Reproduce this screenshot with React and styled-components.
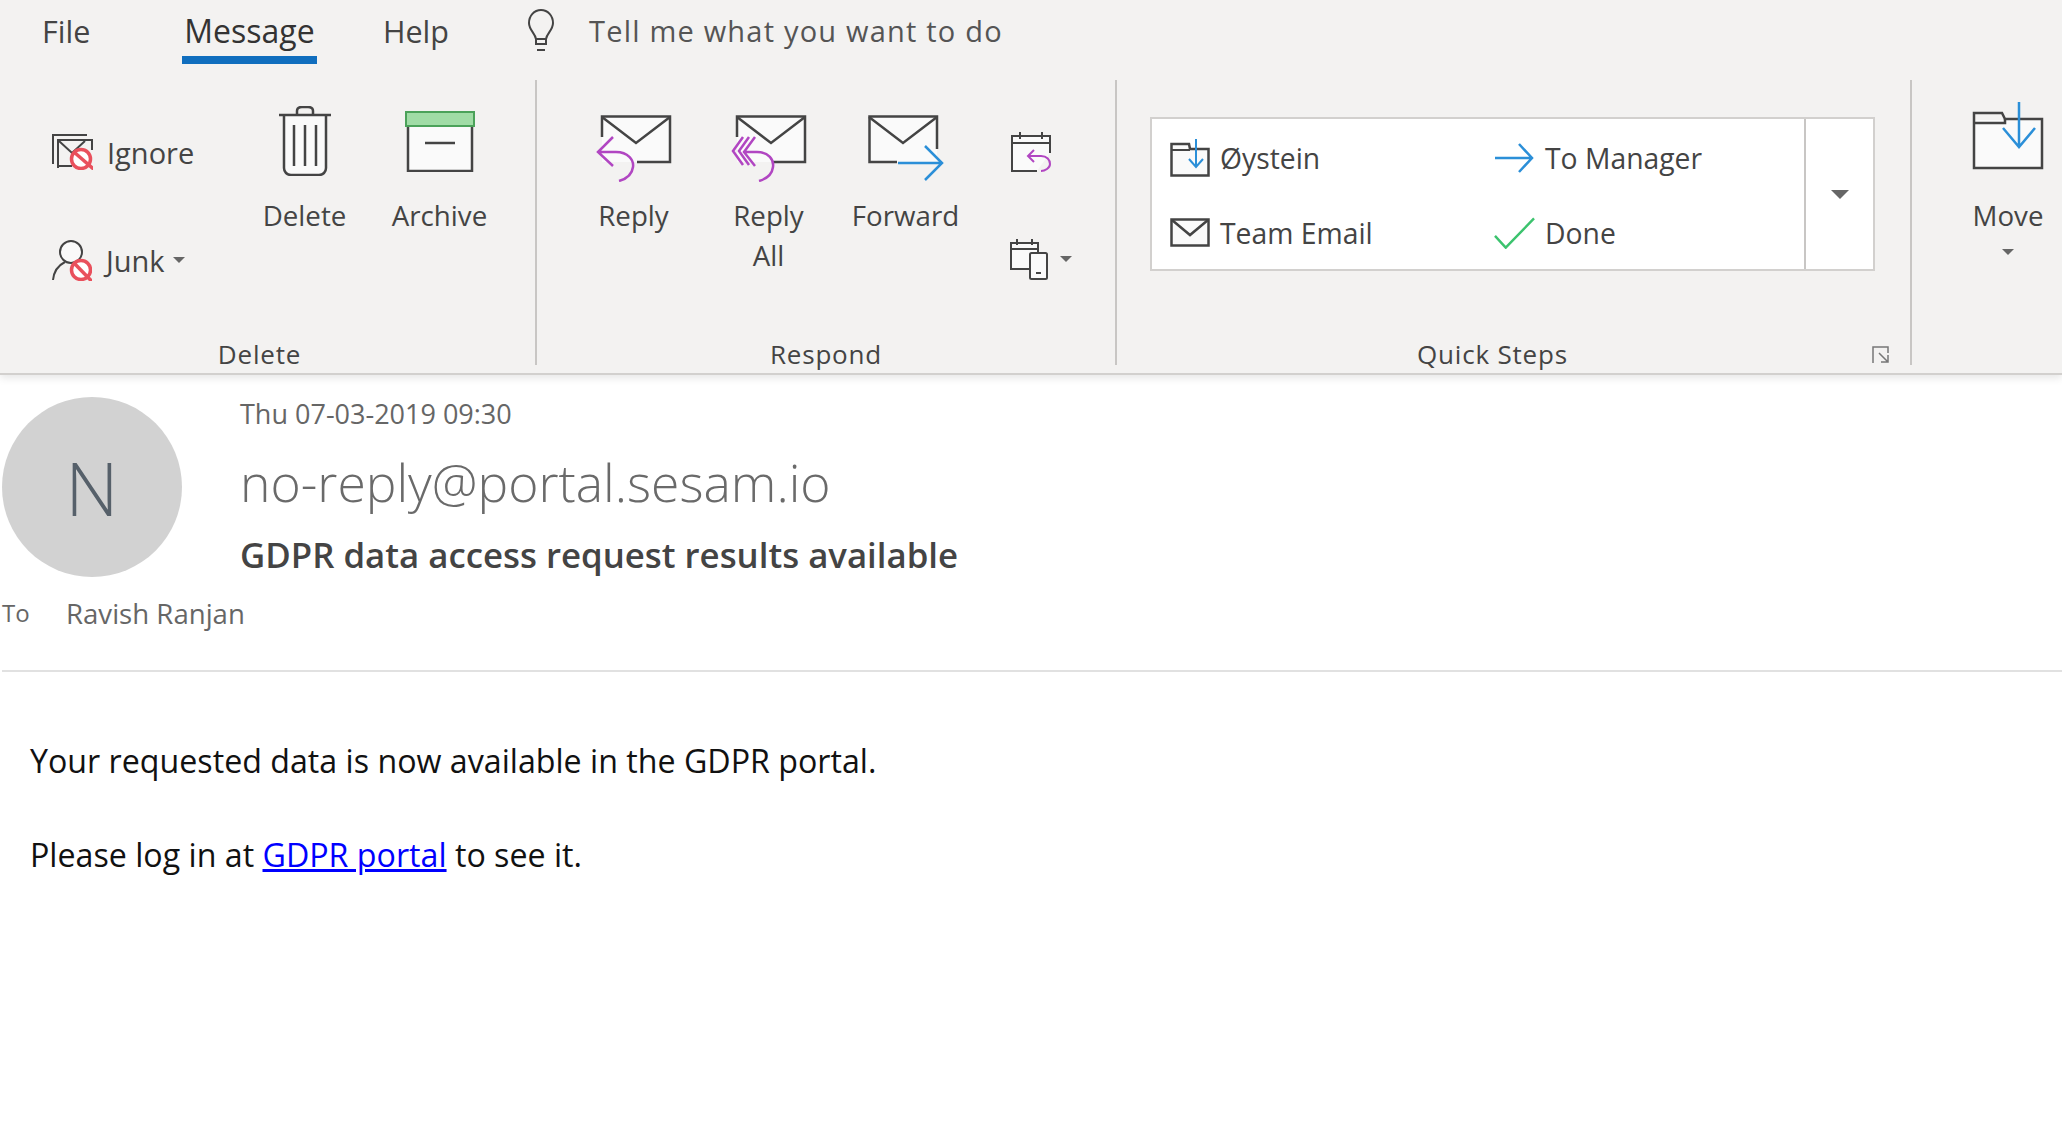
import styled, { createGlobalStyle } from "styled-components";

const GlobalStyle = createGlobalStyle`
  html, body {
    margin: 0;
    padding: 0;
    background: #fff;
    overflow: hidden;
  }
  body {
    font-family: "Open Sans", "Noto Sans", sans-serif;
  }
`;

const INK = "#444";
const PURPLE = "#b146c2";
const BLUE = "#2b8fd8";

const NoSign = ({ cx, cy }) => (
  <g fill="#fff" stroke="#e9505c" strokeWidth="3.5">
    <circle cx={cx} cy={cy} r="9.5" />
    <path d={`M${cx - 6.5} ${cy - 6.5} L${cx + 6.5} ${cy + 6.5}`} />
  </g>
);

const IgnoreIcon = () => (
  <svg width="41" height="36" viewBox="0 0 41 36" fill="none" stroke={INK} strokeWidth="2">
    <path d="M1 30V1H35" />
    <path d="M6 34V6H40V16" />
    <path d="M7 7L20 19L33 7" />
    <path d="M6 32H20" />
    <NoSign cx="29" cy="25" />
  </svg>
);

const JunkIcon = () => (
  <svg width="40" height="41" viewBox="0 0 40 41" fill="none" stroke={INK} strokeWidth="2">
    <circle cx="19" cy="12" r="11" fill="#fafafa" />
    <path d="M1 40C2 30 7 25 13 22" />
    <NoSign cx="29" cy="30" />
  </svg>
);

const TrashIcon = () => (
  <svg width="52" height="70" viewBox="0 0 52 70" fill="#fafafa" stroke={INK} strokeWidth="2.5">
    <path d="M18 8V5C18 2 20 1 23 1H29C32 1 34 2 34 5V8" fill="none" />
    <path d="M5 9V62C5 66 8 69 12 69H40C44 69 47 66 47 62V9" />
    <path d="M0 9H52" />
    <path d="M15 19V60M26 19V60M37 19V60" />
  </svg>
);

const ArchiveIcon = () => (
  <svg width="70" height="61" viewBox="0 0 70 61">
    <rect x="3" y="14" width="64" height="46" fill="#fafafa" stroke={INK} strokeWidth="2.5" />
    <rect x="1" y="1" width="68" height="14" fill="#a0dca6" stroke="#4ba25a" strokeWidth="2" />
    <path d="M20 32H50" stroke={INK} strokeWidth="2.5" />
  </svg>
);

const ReplyIcon = ({ all }) => (
  <svg width="76" height="67" viewBox="0 0 76 67" fill="none">
    <path d="M6 1H74V47H6Z" fill="#fafafa" />
    <path d="M6 22V1.5H74V47H41" stroke={INK} strokeWidth="2.5" />
    <path d="M6 2L40 28L74 2" stroke={INK} strokeWidth="2.5" />
    <g stroke={PURPLE} strokeWidth="2.5">
      {all && <path d="M12 22L2 36L12 50M18 22L8 36L18 50" />}
      <path
        d={
          all
            ? "M24 22L13 37L24 51M13 37H26C38 37 43 45 42 52C41 60 35 64 28 66"
            : "M17 22L2 37L17 51M2 37H20C32 37 38 45 37 52C36 60 30 64 23 66"
        }
      />
    </g>
  </svg>
);

const ForwardIcon = () => (
  <svg width="76" height="67" viewBox="0 0 76 67" fill="none">
    <path d="M1 1H69V47H1Z" fill="#fafafa" />
    <path d="M29 47H1.5V1.5H69V34" stroke={INK} strokeWidth="2.5" />
    <path d="M1 2L35 28L69 2" stroke={INK} strokeWidth="2.5" />
    <path d="M30 48H74M57 31L74 48L57 65" stroke={BLUE} strokeWidth="2.5" />
  </svg>
);

const CalendarReplyIcon = () => (
  <svg width="42" height="42" viewBox="0 0 42 42" fill="none" strokeWidth="2">
    <path d="M27 40H2V5H40V22" fill="#fafafa" stroke={INK} />
    <path d="M2 12H40M10 1V8M32 1V8" stroke={INK} />
    <path d="M24 19L18 25L24 31M18 25H31C37 25 40 29 40 33C40 37 35 40 31 40" stroke={PURPLE} />
  </svg>
);

const CalendarDeviceIcon = () => (
  <svg width="38" height="42" viewBox="0 0 38 42" fill="none" strokeWidth="2">
    <path d="M20 31H1V5H28V14" fill="#fafafa" stroke={INK} />
    <path d="M1 11H28M7 1V7M22 1V7" stroke={INK} />
    <rect x="20" y="15" width="17" height="26" rx="1.5" fill="#fafafa" stroke={INK} />
    <path d="M26 35H31" stroke={INK} />
  </svg>
);

const FolderMoveIcon = () => (
  <svg width="72" height="70" viewBox="0 0 72 70" fill="none">
    <path d="M2 68V20H70V68Z" fill="#fafafa" />
    <path d="M2 68V13H30L33 19H70V68Z" stroke={INK} strokeWidth="2.5" />
    <path d="M2 23H33V19" stroke={INK} strokeWidth="2.5" />
    <path d="M47 2V46M31 28L47 47L63 28" stroke={BLUE} strokeWidth="2.5" />
  </svg>
);

const FolderSmallIcon = () => (
  <svg width="40" height="38" viewBox="0 0 40 38" fill="none">
    <path d="M1.5 36.5V5H19L20 10H38.5V36.5Z" fill="#fafafa" stroke={INK} strokeWidth="2.5" />
    <path d="M2 11H20" stroke={INK} strokeWidth="2" />
    <path d="M26 0V27M19 20L26 28L33 20" stroke={BLUE} strokeWidth="2" />
  </svg>
);

const MailSmallIcon = () => (
  <svg width="40" height="29" viewBox="0 0 40 29" fill="#fafafa" stroke={INK} strokeWidth="2.5">
    <rect x="1.5" y="1.5" width="37" height="26" />
    <path d="M2 2L20 17L38 2" fill="none" />
  </svg>
);

const ArrowRightIcon = () => (
  <svg width="39" height="30" viewBox="0 0 39 30" fill="none" stroke={BLUE} strokeWidth="2.5">
    <path d="M0 15H37M24 1L37 15L24 29" />
  </svg>
);

const CheckIcon = () => (
  <svg width="42" height="32" viewBox="0 0 42 32" fill="none" stroke="#3cc36e" strokeWidth="2.5">
    <path d="M1 19L12 31L41 1" />
  </svg>
);

const BulbIcon = () => (
  <svg width="28" height="43" viewBox="0 0 28 43" fill="none" stroke={INK} strokeWidth="2">
    <path d="M9 30C8 24 2 21 2 14C2 7 7 1 14 1C21 1 26 7 26 14C26 21 20 24 19 30Z" />
    <path d="M9 30V35H19V30M10 41H18" />
  </svg>
);

const LauncherIcon = () => (
  <svg width="18" height="18" viewBox="0 0 18 18" fill="none" stroke="#777" strokeWidth="1.5">
    <path d="M1 17V1H16V7" />
    <path d="M7 7L16 16M16 9V16H9" />
  </svg>
);

const Page = styled.div`
  width: 2062px;
  height: 1139px;
  background: #fff;
  overflow: hidden;
`;

const Ribbon = styled.header`
  height: 375px;
  box-sizing: border-box;
  background: #f3f2f1;
  border-bottom: 2px solid #d2d0ce;
  box-shadow: 0 3px 8px rgba(0, 0, 0, 0.1);
`;

const TabBar = styled.nav`
  display: flex;
  align-items: flex-start;
  height: 64px;
  padding-left: 42px;
`;

const Tab = styled.div`
  width: ${(p) => p.$width}px;
  height: 64px;
  box-sizing: border-box;
  margin-right: ${(p) => p.$gap || 0}px;
  font-size: ${(p) => (p.$active ? 32 : 30.5)}px;
  font-weight: ${(p) => (p.$active ? 500 : 400)};
  line-height: 62px;
  text-align: ${(p) => (p.$active ? "center" : "left")};
  white-space: nowrap;
  color: ${(p) => (p.$active ? "#333" : "#444")};
  border-bottom: ${(p) => (p.$active ? "8px solid #106ebe" : "none")};
`;

const TellMe = styled.div`
  display: flex;
  align-items: center;
  gap: 34px;
  height: 60px;
  font-size: 29px;
  letter-spacing: 1.2px;
  color: #555;
`;

const Groups = styled.div`
  display: flex;
  padding-top: 16px;
`;

const Group = styled.section`
  position: relative;
  flex: 0 0 auto;
  width: ${(p) => p.$width}px;
  height: 285px;
  box-sizing: border-box;
  display: flex;
  flex-direction: column;
  border-right: ${(p) => (p.$last ? "none" : "2px solid #c8c6c4")};
`;

const GroupBody = styled.div`
  flex: 1;
  display: flex;
  align-items: flex-start;
  padding-left: ${(p) => p.$left}px;
`;

const GroupLabel = styled.div`
  height: 22px;
  padding-right: ${(p) => p.$shift || 0}px;
  font-size: 26px;
  line-height: 22px;
  letter-spacing: 0.8px;
  text-align: center;
  color: #444;
`;

const LargeButton = styled.div`
  width: ${(p) => p.$width || 135}px;
  margin-top: 20px;
  display: flex;
  flex-direction: column;
  align-items: center;
  text-align: center;
`;

const IconSlot = styled.div`
  height: 82px;
  display: flex;
  align-items: ${(p) => p.$align || "flex-start"};
  justify-content: center;
`;

const ButtonLabel = styled.div`
  margin-top: 13px;
  font-size: 27.7px;
  line-height: 40px;
  color: #444;
`;

const SmallColumn = styled.div`
  width: ${(p) => p.$width}px;
  margin-left: ${(p) => p.$left || 0}px;
  padding-top: ${(p) => p.$top}px;
  display: flex;
  flex-direction: column;
  gap: ${(p) => p.$gap}px;
`;

const SmallButton = styled.div`
  height: 50px;
  display: flex;
  align-items: center;
  gap: ${(p) => p.$gap ?? 14}px;
  font-size: 29px;
  color: #444;
`;

const Caret = styled.span`
  display: block;
  flex: none;
  width: 0;
  height: 0;
  margin-left: ${(p) => p.$left || 0}px;
  margin-top: ${(p) => p.$top || 0}px;
  border-left: ${(p) => p.$size}px solid transparent;
  border-right: ${(p) => p.$size}px solid transparent;
  border-top: ${(p) => p.$size}px solid #666;
`;

const QuickBox = styled.div`
  width: 725px;
  height: 154px;
  margin: 37px 0 0 33px;
  box-sizing: border-box;
  display: flex;
  background: #fff;
  border: 2px solid #d2d0ce;
`;

const QuickGrid = styled.div`
  width: 654px;
  box-sizing: border-box;
  padding: 1px 0 0 17px;
  display: grid;
  grid-template-columns: 325px 1fr;
  grid-auto-rows: 75px;
  border-right: 2px solid #c8c6c4;
`;

const QuickItem = styled.div`
  display: flex;
  align-items: center;
  gap: 10px;
  font-size: 28.3px;
  color: #444;
`;

const QuickIcon = styled.span`
  display: flex;
  justify-content: center;
  width: 41px;
`;

const QuickMore = styled.div`
  flex: 1;
  display: flex;
  align-items: center;
  justify-content: center;
`;

const Launcher = styled.span`
  position: absolute;
  right: 20px;
  bottom: 1px;
  display: flex;
`;

const Message = styled.main`
  padding-top: 22px;
`;

const HeaderRow = styled.div`
  display: flex;
  padding-left: 2px;
`;

const Avatar = styled.div`
  flex: none;
  width: 180px;
  height: 180px;
  border-radius: 50%;
  display: flex;
  align-items: center;
  justify-content: center;
  background: #d2d2d2;
  font-size: 74px;
  font-weight: 300;
  color: #56606a;
`;

const HeaderText = styled.div`
  padding-left: 58px;
`;

const DateLine = styled.div`
  height: 34px;
  font-size: 27px;
  line-height: 34px;
  color: #666;
`;

const Sender = styled.div`
  height: 74px;
  margin-top: 14px;
  font-size: 51.6px;
  font-weight: 300;
  line-height: 74px;
  color: #6a6a6a;
`;

const Subject = styled.div`
  margin-top: 11px;
  font-size: 34.8px;
  font-weight: 600;
  line-height: 50px;
  color: #444;
`;

const Recipients = styled.div`
  display: flex;
  margin-top: 16px;
  padding-left: 2px;
  font-size: 27.6px;
  line-height: 34px;
  color: #666;
`;

const RecipientKey = styled.span`
  width: 64px;
  font-size: 24px;
`;

const Divider = styled.hr`
  height: 2px;
  margin: 40px 0 0 2px;
  border: 0;
  background: #e1e1e1;
`;

const Body = styled.div`
  padding: 67px 0 0 30px;
  font-size: 32.2px;
  line-height: 44px;
  color: #111;
`;

const Paragraph = styled.p`
  margin: 0 0 50px;
`;

const PortalLink = styled.a`
  color: #0000ff;
  text-decoration: underline;
`;

export default function App() {
  return (
    <Page>
      <GlobalStyle />
      <Ribbon>
        <TabBar>
          <Tab $width={140}>File</Tab>
          <Tab $width={135} $gap={66} $active>Message</Tab>
          <Tab $width={144}>Help</Tab>
          <TellMe>
            <BulbIcon />
            Tell me what you want to do
          </TellMe>
        </TabBar>
        <Groups>
          <Group $width={537}>
            <GroupBody $left={52}>
              <SmallColumn $width={185} $top={47} $gap={58}>
                <SmallButton>
                  <IgnoreIcon />
                  Ignore
                </SmallButton>
                <SmallButton>
                  <JunkIcon />
                  Junk
                  <Caret $size={6} $left={-6} />
                </SmallButton>
              </SmallColumn>
              <LargeButton>
                <IconSlot $align="center">
                  <TrashIcon />
                </IconSlot>
                <ButtonLabel>Delete</ButtonLabel>
              </LargeButton>
              <LargeButton>
                <IconSlot $align="center">
                  <ArchiveIcon />
                </IconSlot>
                <ButtonLabel>Archive</ButtonLabel>
              </LargeButton>
            </GroupBody>
            <GroupLabel $shift={16}>Delete</GroupLabel>
          </Group>

          <Group $width={580}>
            <GroupBody $left={30}>
              <LargeButton $width={133}>
                <IconSlot $align="flex-end">
                  <ReplyIcon />
                </IconSlot>
                <ButtonLabel>Reply</ButtonLabel>
              </LargeButton>
              <LargeButton $width={137}>
                <IconSlot $align="flex-end">
                  <ReplyIcon all />
                </IconSlot>
                <ButtonLabel>
                  Reply
                  <br />
                  All
                </ButtonLabel>
              </LargeButton>
              <LargeButton $width={137}>
                <IconSlot $align="flex-end">
                  <ForwardIcon />
                </IconSlot>
                <ButtonLabel>Forward</ButtonLabel>
              </LargeButton>
              <SmallColumn $width={80} $left={36} $top={47} $gap={57}>
                <SmallButton>
                  <CalendarReplyIcon />
                </SmallButton>
                <SmallButton $gap={12}>
                  <CalendarDeviceIcon />
                  <Caret $size={6} />
                </SmallButton>
              </SmallColumn>
            </GroupBody>
            <GroupLabel>Respond</GroupLabel>
          </Group>

          <Group $width={795}>
            <GroupBody>
              <QuickBox>
                <QuickGrid>
                  <QuickItem>
                    <QuickIcon>
                      <FolderSmallIcon />
                    </QuickIcon>
                    Øystein
                  </QuickItem>
                  <QuickItem>
                    <QuickIcon>
                      <ArrowRightIcon />
                    </QuickIcon>
                    To Manager
                  </QuickItem>
                  <QuickItem>
                    <QuickIcon>
                      <MailSmallIcon />
                    </QuickIcon>
                    Team Email
                  </QuickItem>
                  <QuickItem>
                    <QuickIcon>
                      <CheckIcon />
                    </QuickIcon>
                    Done
                  </QuickItem>
                </QuickGrid>
                <QuickMore>
                  <Caret $size={9} />
                </QuickMore>
              </QuickBox>
            </GroupBody>
            <GroupLabel $shift={42}>Quick Steps</GroupLabel>
            <Launcher>
              <LauncherIcon />
            </Launcher>
          </Group>

          <Group $width={150} $last>
            <GroupBody $left={42}>
              <LargeButton>
                <IconSlot>
                  <FolderMoveIcon />
                </IconSlot>
                <ButtonLabel>Move</ButtonLabel>
                <Caret $size={6} $top={14} />
              </LargeButton>
            </GroupBody>
          </Group>
        </Groups>
      </Ribbon>

      <Message>
        <HeaderRow>
          <Avatar>N</Avatar>
          <HeaderText>
            <DateLine>Thu 07-03-2019 09:30</DateLine>
            <Sender>no-reply@portal.sesam.io</Sender>
            <Subject>GDPR data access request results available</Subject>
          </HeaderText>
        </HeaderRow>
        <Recipients>
          <RecipientKey>To</RecipientKey>
          <span>Ravish Ranjan</span>
        </Recipients>
        <Divider />
        <Body>
          <Paragraph>Your requested data is now available in the GDPR portal.</Paragraph>
          <Paragraph>
            Please log in at <PortalLink href="#">GDPR portal</PortalLink> to see it.
          </Paragraph>
        </Body>
      </Message>
    </Page>
  );
}
